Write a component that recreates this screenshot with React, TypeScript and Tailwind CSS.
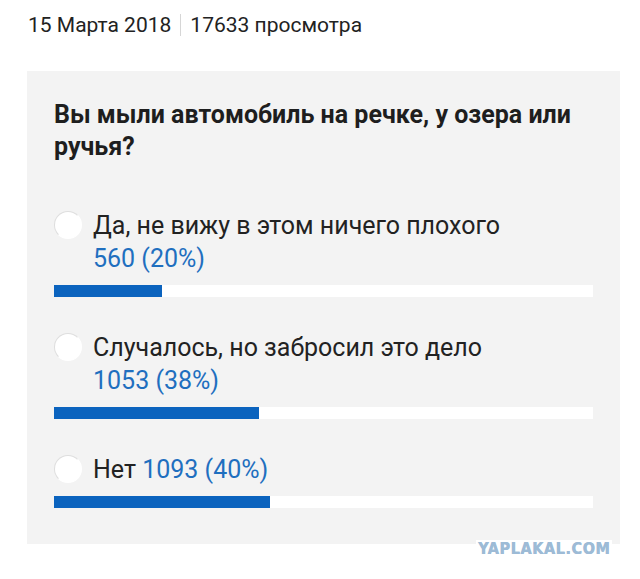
const options = [
  { label: "Да, не вижу в этом ничего плохого", votes: "560 (20%)", pct: 20, inline: false },
  { label: "Случалось, но забросил это дело", votes: "1053 (38%)", pct: 38, inline: false },
  { label: "Нет", votes: "1093 (40%)", pct: 40, inline: true },
];

function Radio() {
  return (
    <div className="mt-[2px] h-[28px] w-[28px] shrink-0 rounded-full border border-[#dedede] border-r-white border-b-white bg-white" />
  );
}

export default function App() {
  return (
    <div
      className="relative h-[579px] w-[640px] overflow-hidden bg-white text-[#222]"
      style={{ fontFamily: "Roboto, 'Liberation Sans', sans-serif" }}
    >
      {/* дата и просмотры */}
      <div className="flex items-center pl-[28px] pt-[13px] text-[21px] leading-[24px]">
        <span>15 Марта 2018</span>
        <span className="mx-[9px] h-[22px] w-px bg-[#d6d6d6]" />
        <span>17633 просмотра</span>
      </div>

      {/* опрос */}
      <div className="ml-[27px] mt-[34px] w-[593px] bg-[#f3f3f3] px-[27px] pb-[36px] pt-[28px]">
        <div className="text-[25px] font-bold leading-[32px] text-[#1e1e1e]">
          Вы мыли автомобиль на речке, у озера или ручья?
        </div>

        <div className="mt-[46px] flex flex-col gap-[34px]">
          {options.map((o) => (
            <div key={o.label}>
              <div className="flex items-start gap-[11px]">
                <Radio />
                <div className="text-[25px] leading-[33px]">
                  {o.inline ? (
                    <span>
                      {o.label} <span className="text-[#1f6fbf]">{o.votes}</span>
                    </span>
                  ) : (
                    <>
                      <div>{o.label}</div>
                      <div className="text-[#1f6fbf]">{o.votes}</div>
                    </>
                  )}
                </div>
              </div>
              <div className="mt-[10px] h-[12px] w-[539px] bg-white">
                <div className="h-full bg-[#0b63be]" style={{ width: `${o.pct}%` }} />
              </div>
            </div>
          ))}
        </div>
      </div>

      {/* водяной знак */}
      <div
        className="absolute left-[476px] top-[540px] bg-white px-[2px] text-[16px] font-black leading-[18px] tracking-[0.6px] text-[#9dbbd6] [text-shadow:0.5px_0_0_#9dbbd6]"
        style={{ fontFamily: "'DejaVu Sans Condensed', 'DejaVu Sans', sans-serif" }}
      >
        YAPLAKAL.COM
      </div>
    </div>
  );
}
